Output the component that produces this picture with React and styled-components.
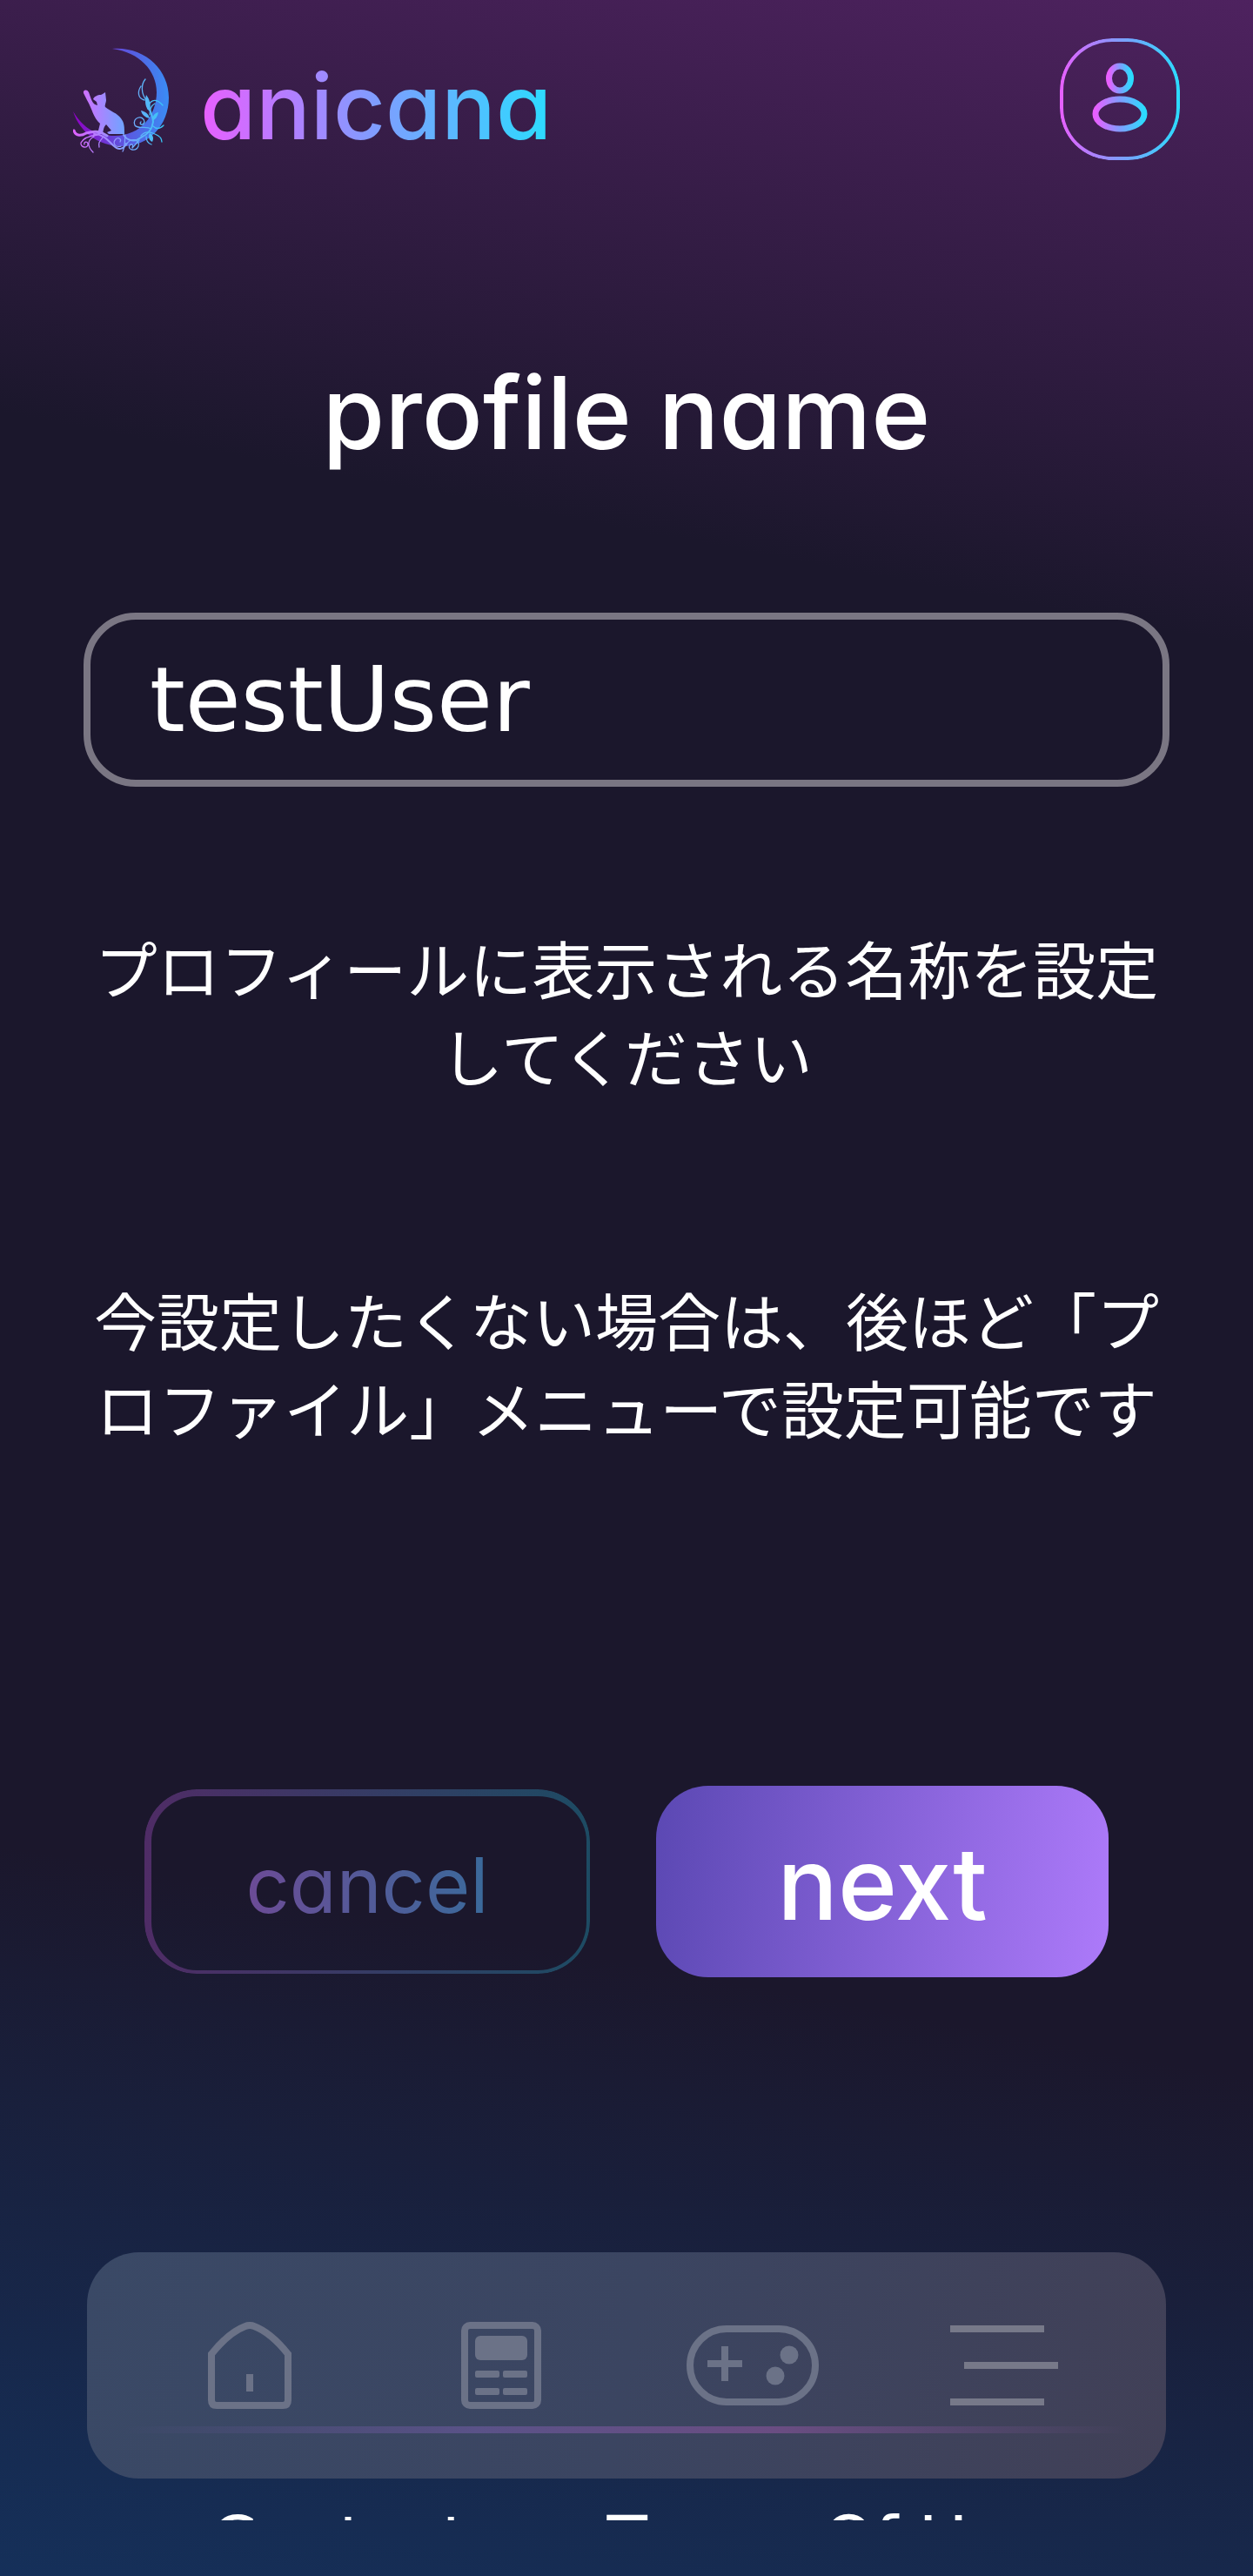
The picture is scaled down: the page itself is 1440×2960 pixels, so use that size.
import React from "react";
import styled, { createGlobalStyle } from "styled-components";

const Global = createGlobalStyle`
  *, *::before, *::after { box-sizing: border-box; }
  html, body { margin: 0; background: #1b172c; }
`;

const Page = styled.div`
  min-height: 100vh;
  display: flex;
  flex-direction: column;
  color: #fff;
  font-family: "Noto Sans CJK JP", sans-serif;
  background: linear-gradient(190.6deg, #4e225f 0%, #1b172c 23%, #1b172c 74%, #15305a 100%);
`;

const Header = styled.header`
  display: flex;
  align-items: center;
  justify-content: space-between;
  height: 228px;
  padding: 0 84px;
`;

const Brand = styled.a`
  display: flex;
  align-items: center;
  gap: 32px;
  text-decoration: none;
`;

const rounded = `
  font-family: Inter, "Liberation Sans", sans-serif;
  font-feature-settings: "cv11" 1;
`;

const Wordmark = styled.span`
  ${rounded}
  padding-top: 16px;
  font-size: 104px;
  line-height: 120px;
  font-weight: 500;
  color: transparent;
  background: linear-gradient(90deg, #e85fff, #7f9dff 50%, #2bdcff);
  background-clip: text;
`;

const UserButton = styled.button`
  display: grid;
  place-items: center;
  position: relative;
  width: 138px;
  height: 140px;
  padding: 0;
  border: 0;
  border-radius: 60px;
  background: transparent;
  &::before {
    content: "";
    position: absolute;
    inset: 0;
    padding: 4px;
    border-radius: 60px;
    background: linear-gradient(90deg, #e85fff, #7f9dff 50%, #2bdcff);
    mask: linear-gradient(#000 0 0) content-box exclude, linear-gradient(#000 0 0);
  }
`;

const Main = styled.main`
  flex: 1;
  display: flex;
  flex-direction: column;
  padding: 0 96px;
`;

const Title = styled.h1`
  ${rounded}
  margin: 176px 0 0;
  font-size: 116px;
  line-height: 140px;
  font-weight: 500;
  text-align: center;
`;

const NameInput = styled.input`
  width: 100%;
  height: 200px;
  margin-top: 160px;
  padding: 0 68px;
  border: 8px solid #7a7683;
  border-radius: 60px;
  background: transparent;
  color: #fff;
  font-family: "DejaVu Sans", sans-serif;
  font-size: 104px;
  outline: none;
`;

const Note = styled.p`
  margin: ${(p) => p.$top}px 0 0;
  font-size: 72px;
  line-height: 101px;
  text-align: center;
`;

const Actions = styled.div`
  display: flex;
  align-items: center;
  justify-content: center;
  gap: 76px;
  margin-top: 386px;
`;

const NextButton = styled.button`
  ${rounded}
  width: 520px;
  height: 220px;
  padding: 4px 0 0;
  border: 0;
  border-radius: 60px;
  background: linear-gradient(96deg, #5b48b3, #ad7afa);
  color: #fff;
  font-size: 116px;
  font-weight: 500;
`;

const CancelButton = styled.button`
  ${rounded}
  position: relative;
  width: 512px;
  height: 212px;
  padding: 8px 0 0;
  border: 0;
  border-radius: 60px;
  background: transparent;
  font-size: 88px;
  &::before {
    content: "";
    position: absolute;
    inset: 0;
    padding: 8px 4px 4px 8px;
    border-radius: 60px;
    background: linear-gradient(90deg, #4f2c66, #1d4b63);
    mask: linear-gradient(#000 0 0) content-box exclude, linear-gradient(#000 0 0);
  }
`;

const CancelLabel = styled.span`
  color: transparent;
  background: linear-gradient(90deg, #6c4b96, #3a6a9b);
  background-clip: text;
`;

const Dock = styled.nav`
  display: grid;
  grid-template-columns: repeat(4, 1fr);
  grid-template-rows: 200px 8px;
  margin: 316px 4px 0;
  height: 260px;
  padding: 0 42px;
  border-radius: 60px;
  background: linear-gradient(100deg, #3a4966, #3b4561 50%, #414057);
`;

const DockLink = styled.a`
  display: grid;
  place-items: center;
  padding-top: 60px;
  color: #6b7287;
`;

const DockLine = styled.span`
  grid-column: 1 / -1;
  background: linear-gradient(90deg, #64508700, #5a5288 35%, #6a4d82 65%, #64508700);
`;

const Footer = styled.footer`
  display: flex;
  justify-content: center;
  gap: 160px;
  height: 20px;
  margin: 28px 0 64px;
  overflow: hidden;
`;

const FooterLink = styled.a`
  color: #fff;
  font-family: "DejaVu Sans", sans-serif;
  font-size: 76px;
  line-height: 88px;
  text-decoration: none;
  white-space: nowrap;
`;

function MoonCat() {
  return (
    <svg width="114" height="124" viewBox="0 0 114 124" aria-hidden="true">
      <defs>
        <linearGradient id="moon" x1="0" x2="1">
          <stop offset="0" stopColor="#9000c4" />
          <stop offset="0.5" stopColor="#5f50dd" />
          <stop offset="1" stopColor="#3a8cf4" />
        </linearGradient>
        <linearGradient id="cat" x1="0" x2="1">
          <stop offset="0" stopColor="#d070ff" />
          <stop offset="1" stopColor="#6fa4ff" />
        </linearGradient>
        <linearGradient id="vine" gradientUnits="userSpaceOnUse" x1="0" x2="104" y1="0" y2="0">
          <stop offset="0" stopColor="#e060ff" />
          <stop offset="0.5" stopColor="#8c9cff" />
          <stop offset="1" stopColor="#35c8f5" />
        </linearGradient>
      </defs>
      <g transform="translate(0 3)">
        <path fill="url(#moon)" d="M45 1C82-2 110 25 110 57c0 32-23 56-53 56C30 113 8 98 0 73c12 20 27 28 48 28 30 0 48-24 48-50C96 26 76 5 45 1z" />
        <path fill="url(#cat)" d="M12 52c-1-4 4-5 6-1 2 5 3 11 7 14l3 1-1-4-4-3c1-3 5-5 9-5l2-1 3-2 1 9c0 3-2 6-1 8 6 5 14 7 18 13 4 5 4 10 4 18H41l-2-2 5-2-6-7c-3 3-3 6-4 11h-6l3-12c-8-7-9-17-15-27z" />
        <g fill="none" stroke="url(#vine)" strokeLinecap="round">
          <path strokeWidth="3" d="M1 95c2 7 9 6 14 3 11-3 16-2 24 3" />
          <path strokeWidth="2" d="M24 99c10 0 16 7 22 13 6 6 12 5 15-2M58 100c5 8 14 8 20 3 9-4 13-10 14-18-1-10-6-18-8-26" />
          <path strokeWidth="1.3" d="M28 100c-8 1-16 3-19 9-1 6 9 7 8 1-1-3-5-2-4 1M24 102c-8 4-8 11-1 18M34 103c-4 5-5 6-4 11M55 113c-7 2-10-4-6-8 3-3 7 0 5 3M60 100c-1 8 0 14-3 19M61 112c4-10 17-7 14 1-3 7-13 4-10-1 2-3 5 0 3 2M78 101c4-5 10-5 16-2 5 2 8 5 8 9M90 93c-7-4-15 1-19-4-4-9 10-13 11-4-1 5-7 3-4 0M86 70c1-9 8-14 17-4M84 60c-6-8-6-18-1-24M82 60c-8-2-8-10-4-16M88 77c0-8 2-11 6-13M92 90c4 4 8 3 12-1M76 106l-8 9M84 102c0 5 3 8 6 9" />
        </g>
        <path fill="url(#vine)" d="M84 54c4 5 6 12 4 19-5-4-6-11-4-19zM78 72c5 1 9 4 10 9-5-1-9-4-10-9zM88 98c4 2 5 6 3 10-4-2-5-6-3-10zM98 74c-1 5-3 8-7 10 0-5 2-9 7-10z" />
      </g>
    </svg>
  );
}

function UserGlyph() {
  return (
    <svg width="64" height="84" viewBox="0 -4 64 84" fill="none" strokeWidth="7" aria-hidden="true">
      <defs>
        <linearGradient id="user" x1="0" x2="1">
          <stop offset="0" stopColor="#e85fff" />
          <stop offset="0.5" stopColor="#7f9dff" />
          <stop offset="1" stopColor="#2bdcff" />
        </linearGradient>
      </defs>
      <ellipse cx="32" cy="14" rx="12.5" ry="14" stroke="url(#user)" />
      <ellipse cx="32" cy="55" rx="28" ry="17" stroke="url(#user)" />
    </svg>
  );
}

const HomeGlyph = () => (
  <svg width="96" height="100" viewBox="0 0 96 100" fill="none" stroke="currentColor" strokeWidth="8" aria-hidden="true">
    <path d="M4 37 Q24 12 43 5 Q48 3 53 5 Q72 12 92 37 V90 Q92 96 86 96 H10 Q4 96 4 90Z" />
    <path d="M48 60v20" />
  </svg>
);

const NewsGlyph = () => (
  <svg width="92" height="100" viewBox="0 0 92 100" fill="currentColor" aria-hidden="true">
    <rect x="4" y="4" width="84" height="92" rx="6" fill="none" stroke="currentColor" strokeWidth="8" />
    <rect x="16" y="16" width="60" height="28" rx="6" />
    <rect x="16" y="56" width="28" height="8" rx="2" />
    <rect x="48" y="56" width="28" height="8" rx="2" />
    <rect x="16" y="76" width="28" height="8" rx="2" />
    <rect x="48" y="76" width="28" height="8" rx="2" />
  </svg>
);

const PadGlyph = () => (
  <svg width="152" height="94" viewBox="0 0 152 94" fill="none" stroke="currentColor" strokeWidth="8" aria-hidden="true">
    <rect x="4" y="5" width="144" height="84" rx="42" />
    <path d="M24 45h40M44 25v40" />
    <circle cx="118" cy="35" r="10.5" fill="currentColor" stroke="none" />
    <circle cx="102" cy="59" r="10.5" fill="currentColor" stroke="none" />
  </svg>
);

const MenuGlyph = () => (
  <svg width="124" height="92" viewBox="0 0 124 92" fill="none" stroke="#777989" strokeWidth="8" aria-hidden="true">
    <path d="M0 4h108M16 46h108M0 88h108" />
  </svg>
);

export default function App() {
  return (
    <>
      <Global />
      <Page>
        <Header>
          <Brand href="#home">
            <MoonCat />
            <Wordmark>anicana</Wordmark>
          </Brand>
          <UserButton type="button" aria-label="Account">
            <UserGlyph />
          </UserButton>
        </Header>
        <Main>
          <Title id="profile-name">profile name</Title>
          <NameInput type="text" aria-labelledby="profile-name" defaultValue="testUser" />
          <Note $top={156}>プロフィールに表示される名称を設定してください</Note>
          <Note $top={202}>今設定したくない場合は、後ほど「プロファイル」メニューで設定可能です</Note>
          <Actions>
            <CancelButton type="button">
              <CancelLabel>cancel</CancelLabel>
            </CancelButton>
            <NextButton type="button">next</NextButton>
          </Actions>
          <Dock aria-label="Main">
            <DockLink href="#top" aria-label="Home"><HomeGlyph /></DockLink>
            <DockLink href="#news" aria-label="News"><NewsGlyph /></DockLink>
            <DockLink href="#games" aria-label="Games"><PadGlyph /></DockLink>
            <DockLink href="#menu" aria-label="Menu"><MenuGlyph /></DockLink>
            <DockLine />
          </Dock>
        </Main>
        <Footer>
          <FooterLink href="#contact">Contact</FooterLink>
          <FooterLink href="#terms">Terms Of Use</FooterLink>
        </Footer>
      </Page>
    </>
  );
}
